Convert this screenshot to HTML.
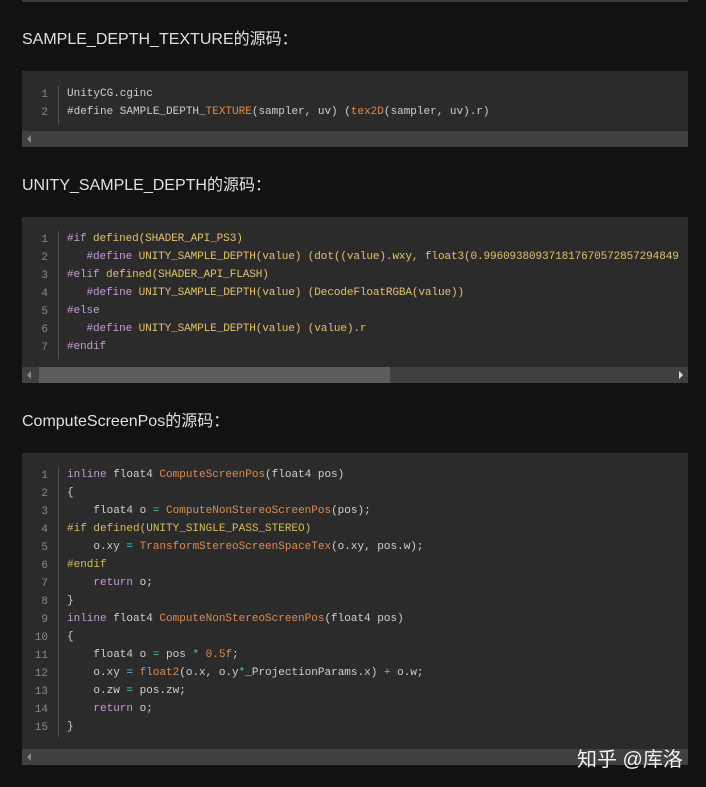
<!DOCTYPE html>
<html><head><meta charset="utf-8"><style>
body{margin:0;background:#121212;width:706px;height:787px;overflow:hidden;position:relative;font-family:"Liberation Sans","Noto Sans CJK SC",sans-serif}
.top{position:absolute;left:22px;top:0;width:666px;height:2px;background:#3a3a3a}
h3{position:absolute;left:22px;margin:0;font-weight:normal;font-size:16px;color:#e0e0e0}
.blk{position:absolute;left:22px;width:666px;background:#2b2b2b;overflow:hidden}
.code{position:absolute;left:0;top:0;font-family:"Liberation Mono",monospace;font-size:11px;line-height:18px;color:#d0d0d0;white-space:pre}
.ln{position:absolute;left:0;width:26px;text-align:right;color:#8a8a8a;font-family:"Liberation Mono",monospace;font-size:11px;line-height:18px;white-space:pre}
.sep{position:absolute;left:36px;width:1px;background:#555}
.c{position:absolute;left:45px}
.sb{position:absolute;left:0;bottom:0;width:666px;height:16px;background:#404040}
.th{position:absolute;top:0;height:16px;background:#5c5c5c}
.al{position:absolute;left:5px;top:4px;width:0;height:0;border-top:4px solid transparent;border-bottom:4px solid transparent;border-right:4px solid #888}
.ar{position:absolute;right:5px;top:4px;width:0;height:0;border-top:4px solid transparent;border-bottom:4px solid transparent;border-left:4px solid #ddd}
.o{color:#e08a50}.p{color:#c49ad6}.y{color:#d8bc5a}.q{color:#5ec4c0}
.b2 .c{color:#e2c070;font-size:11.1px;letter-spacing:-0.15px}
.b2 .p2{color:#c49ad6}
.wm{position:absolute;left:577px;top:743px;font-size:20px;color:#f2f2f2;font-family:"Liberation Sans","Noto Sans CJK SC",sans-serif}
</style></head><body>
<div class="top"></div>
<h3 style="top:25px">SAMPLE_DEPTH_TEXTURE的源码：</h3>
<div class="blk" style="top:71px;height:76px">
<div class="ln" style="top:15px">1
2</div>
<div class="sep" style="top:15px;height:38px"></div>
<div class="code c" style="top:14px">UnityCG.cginc
#define SAMPLE_DEPTH_<span class="o">TEXTURE</span>(sampler, uv) (<span class="o">tex2D</span>(sampler, uv).r)</div>
<div class="sb"><div class="al"></div></div>
</div>

<h3 style="top:171px">UNITY_SAMPLE_DEPTH的源码：</h3>
<div class="blk b2" style="top:217px;height:166px">
<div class="ln" style="top:14px">1
2
3
4
5
6
7</div>
<div class="sep" style="top:14px;height:128px"></div>
<div class="code c" style="top:13px"><span class="p2">#if</span> defined(SHADER_API_PS3)
   <span class="p2">#define</span> UNITY_SAMPLE_DEPTH(value) (dot((value).wxy, float3(0.996093809371817670572857294849
<span class="p2">#elif</span> defined(SHADER_API_FLASH)
   <span class="p2">#define</span> UNITY_SAMPLE_DEPTH(value) (DecodeFloatRGBA(value))
<span class="p2">#else</span>
   <span class="p2">#define</span> UNITY_SAMPLE_DEPTH(value) (value).r
<span class="p2">#endif</span></div>
<div class="sb"><div class="al"></div><div class="th" style="left:17px;width:351px"></div><div class="ar"></div></div>
</div>

<h3 style="top:407px">ComputeScreenPos的源码：</h3>
<div class="blk" style="top:453px;height:312px">
<div class="ln" style="top:14px">1
2
3
4
5
6
7
8
9
10
11
12
13
14
15</div>
<div class="sep" style="top:14px;height:270px"></div>
<div class="code c" style="top:13px"><span class="p">inline</span> float4 <span class="o">ComputeScreenPos</span>(float4 pos)
{
    float4 o <span class="q">=</span> <span class="o">ComputeNonStereoScreenPos</span>(pos);
<span class="y">#if defined(UNITY_SINGLE_PASS_STEREO)</span>
    o.xy <span class="q">=</span> <span class="o">TransformStereoScreenSpaceTex</span>(o.xy, pos.w);
<span class="y">#endif</span>
    <span class="p">return</span> o;
}
<span class="p">inline</span> float4 <span class="o">ComputeNonStereoScreenPos</span>(float4 pos)
{
    float4 o <span class="q">=</span> pos <span class="q">*</span> <span class="o">0.5f</span>;
    o.xy <span class="q">=</span> <span class="o">float2</span>(o.x, o.y<span class="q">*</span>_ProjectionParams.x) <span class="q">+</span> o.w;
    o.zw <span class="q">=</span> pos.zw;
    <span class="p">return</span> o;
}</div>
<div class="sb"><div class="al"></div></div>
</div>
<div class="wm">知乎 @库洛</div>
</body></html>
